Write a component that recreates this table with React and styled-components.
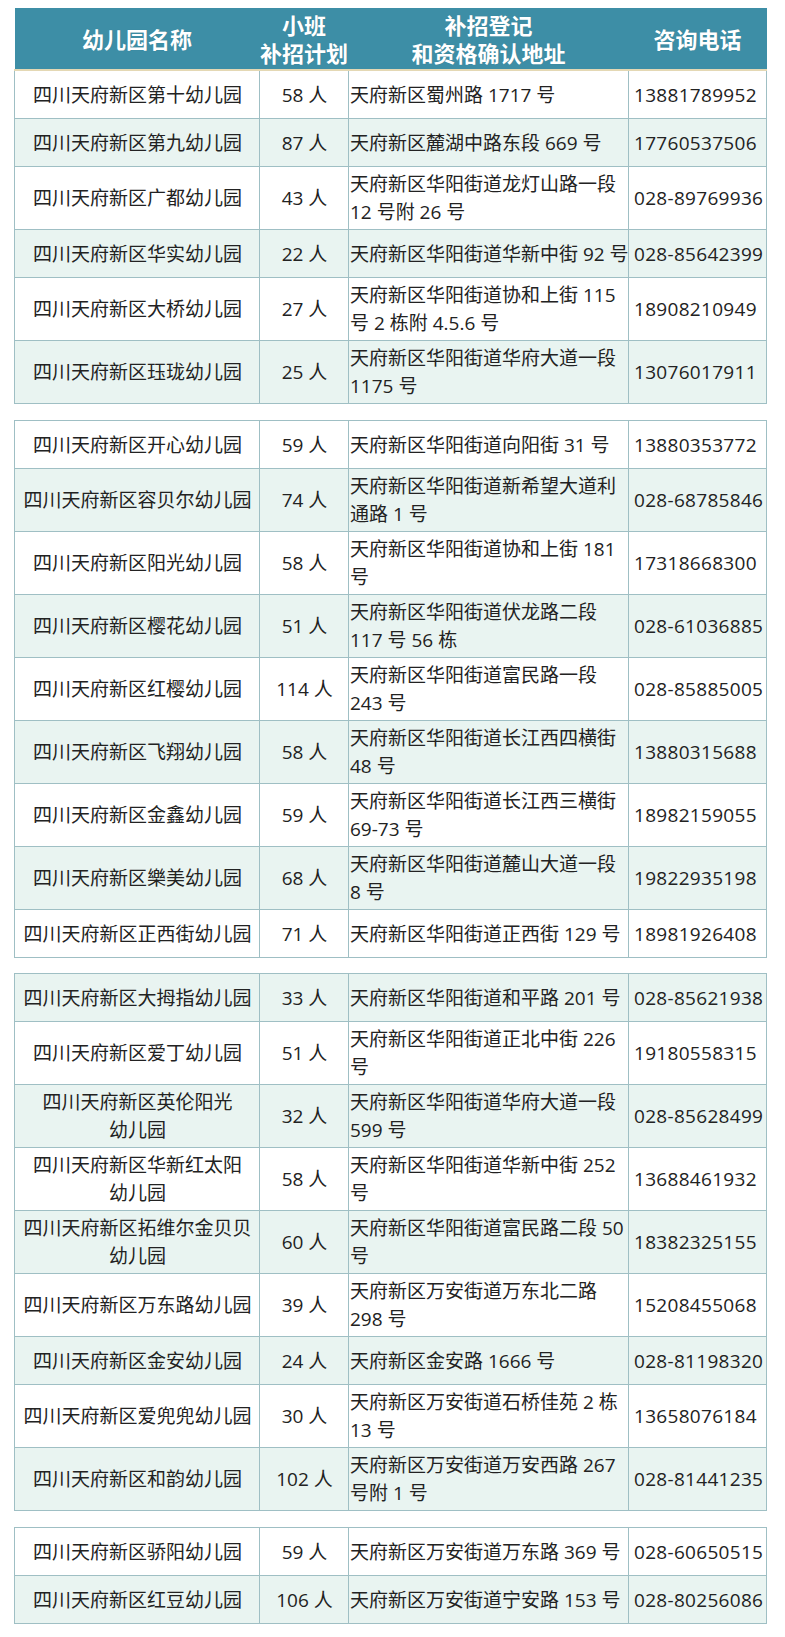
import React from "react";
import styled, { createGlobalStyle } from "styled-components";

const Global = createGlobalStyle`
  html, body { margin: 0; padding: 0; background: #ffffff; }
  body { font-family: "Open Sans", "Noto Sans CJK SC", sans-serif; color: #222; }
`;

const Page = styled.div`
  padding: 8px 0 16px 14px;
  width: 752px;
  display: flex;
  flex-direction: column;
`;

const Table = styled.table`
  width: 752px;
  table-layout: fixed;
  border-collapse: collapse;
  margin-top: ${(p) => p.$gap || 0}px;
`;

const HeadCell = styled.th`
  height: 61px;
  padding: 0;
  background: #3d8ea6;
  color: #ffffff;
  font-weight: 700;
  font-size: 22px;
  line-height: 28px;
  text-align: center;
  vertical-align: middle;
  border-bottom: 2px solid #e4d8b4;
  text-shadow: 0 0 1px rgba(0, 0, 0, 0.15);
`;

const Row = styled.tr`
  background: ${(p) => (p.$tint ? "#e9f4f1" : "#ffffff")};
`;

const Cell = styled.td`
  height: ${(p) => (p.$tall ? "62px" : "47px")};
  padding: 0 1px 0 ${(p) => p.$pl || "2px"};
  border: 1px solid #9fbfc4;
  font-size: 19px;
  line-height: 28px;
  letter-spacing: ${(p) => p.$ls || "0"};
  color: #222;
  text-align: ${(p) => p.$align || "center"};
  vertical-align: middle;
  white-space: nowrap;
  overflow: hidden;
`;

const Line = styled.div``;

const groups = [
  {
    start: 0,
    gap: 0,
    header: true,
    rows: [
      [["四川天府新区第十幼儿园"], "58 人", ["天府新区蜀州路 1717 号"], "13881789952"],
      [["四川天府新区第九幼儿园"], "87 人", ["天府新区麓湖中路东段 669 号"], "17760537506"],
      [["四川天府新区广都幼儿园"], "43 人", ["天府新区华阳街道龙灯山路一段", "12 号附 26 号"], "028-89769936"],
      [["四川天府新区华实幼儿园"], "22 人", ["天府新区华阳街道华新中街 92 号"], "028-85642399"],
      [["四川天府新区大桥幼儿园"], "27 人", ["天府新区华阳街道协和上街 115", "号 2 栋附 4.5.6 号"], "18908210949"],
      [["四川天府新区珏珑幼儿园"], "25 人", ["天府新区华阳街道华府大道一段", "1175 号"], "13076017911"],
    ],
  },
  {
    start: 0,
    gap: 16,
    rows: [
      [["四川天府新区开心幼儿园"], "59 人", ["天府新区华阳街道向阳街 31 号"], "13880353772"],
      [["四川天府新区容贝尔幼儿园"], "74 人", ["天府新区华阳街道新希望大道利", "通路 1 号"], "028-68785846"],
      [["四川天府新区阳光幼儿园"], "58 人", ["天府新区华阳街道协和上街 181", "号"], "17318668300"],
      [["四川天府新区樱花幼儿园"], "51 人", ["天府新区华阳街道伏龙路二段", "117 号 56 栋"], "028-61036885"],
      [["四川天府新区红樱幼儿园"], "114 人", ["天府新区华阳街道富民路一段", "243 号"], "028-85885005"],
      [["四川天府新区飞翔幼儿园"], "58 人", ["天府新区华阳街道长江西四横街", "48 号"], "13880315688"],
      [["四川天府新区金鑫幼儿园"], "59 人", ["天府新区华阳街道长江西三横街", "69-73 号"], "18982159055"],
      [["四川天府新区樂美幼儿园"], "68 人", ["天府新区华阳街道麓山大道一段", "8 号"], "19822935198"],
      [["四川天府新区正西街幼儿园"], "71 人", ["天府新区华阳街道正西街 129 号"], "18981926408"],
    ],
  },
  {
    start: 1,
    gap: 15,
    rows: [
      [["四川天府新区大拇指幼儿园"], "33 人", ["天府新区华阳街道和平路 201 号"], "028-85621938"],
      [["四川天府新区爱丁幼儿园"], "51 人", ["天府新区华阳街道正北中街 226", "号"], "19180558315"],
      [["四川天府新区英伦阳光", "幼儿园"], "32 人", ["天府新区华阳街道华府大道一段", "599 号"], "028-85628499"],
      [["四川天府新区华新红太阳", "幼儿园"], "58 人", ["天府新区华阳街道华新中街 252", "号"], "13688461932"],
      [["四川天府新区拓维尔金贝贝", "幼儿园"], "60 人", ["天府新区华阳街道富民路二段 50", "号"], "18382325155"],
      [["四川天府新区万东路幼儿园"], "39 人", ["天府新区万安街道万东北二路", "298 号"], "15208455068"],
      [["四川天府新区金安幼儿园"], "24 人", ["天府新区金安路 1666 号"], "028-81198320"],
      [["四川天府新区爱兜兜幼儿园"], "30 人", ["天府新区万安街道石桥佳苑 2 栋", "13 号"], "13658076184"],
      [["四川天府新区和韵幼儿园"], "102 人", ["天府新区万安街道万安西路 267", "号附 1 号"], "028-81441235"],
    ],
  },
  {
    start: 0,
    gap: 16,
    rows: [
      [["四川天府新区骄阳幼儿园"], "59 人", ["天府新区万安街道万东路 369 号"], "028-60650515"],
      [["四川天府新区红豆幼儿园"], "106 人", ["天府新区万安街道宁安路 153 号"], "028-80256086"],
    ],
  },
];

function Lines({ items }) {
  return items.map((t, i) => <Line key={i}>{t}</Line>);
}

function Group({ group }) {
  return (
    <Table $gap={group.gap}>
      <colgroup>
        <col style={{ width: 245 }} />
        <col style={{ width: 89 }} />
        <col style={{ width: 280 }} />
        <col style={{ width: 138 }} />
      </colgroup>
      {group.header && (
        <thead>
          <tr>
            <HeadCell>幼儿园名称</HeadCell>
            <HeadCell>
              <Line>小班</Line>
              <Line>补招计划</Line>
            </HeadCell>
            <HeadCell>
              <Line>补招登记</Line>
              <Line>和资格确认地址</Line>
            </HeadCell>
            <HeadCell>咨询电话</HeadCell>
          </tr>
        </thead>
      )}
      <tbody>
        {group.rows.map(([name, count, addr, phone], i) => {
          const tall = name.length > 1 || addr.length > 1;
          return (
            <Row key={i} $tint={(i + group.start) % 2 === 1}>
              <Cell $tall={tall}>
                <Lines items={name} />
              </Cell>
              <Cell $tall={tall}>{count}</Cell>
              <Cell $tall={tall} $align="left" $pl="1px">
                <Lines items={addr} />
              </Cell>
              <Cell $tall={tall} $align="left" $pl="5px" $ls="0.3px">
                {phone}
              </Cell>
            </Row>
          );
        })}
      </tbody>
    </Table>
  );
}

export default function App() {
  return (
    <>
      <Global />
      <Page>
        {groups.map((g, i) => (
          <Group key={i} group={g} />
        ))}
      </Page>
    </>
  );
}
